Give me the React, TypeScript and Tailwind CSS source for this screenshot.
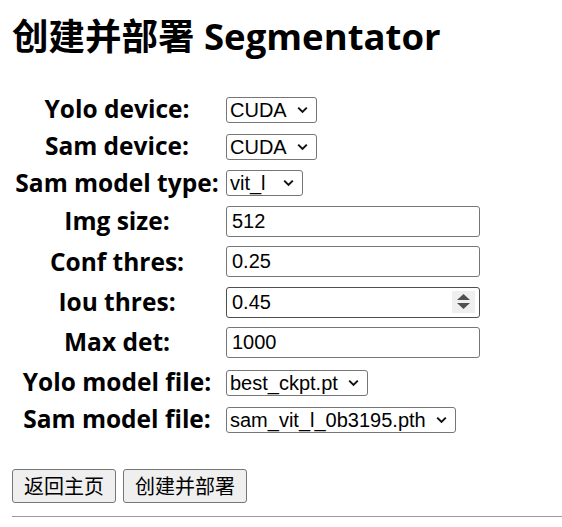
import type { ReactNode } from 'react';

const labelFont = { fontFamily: '"Open Sans", "Noto Sans CJK SC", sans-serif' };
const fieldFont = { fontFamily: '"Liberation Sans", Arial, sans-serif' };
const cjkFont = { fontFamily: '"Noto Sans CJK SC", "Open Sans", sans-serif' };

function Row({ label, h, children }: { label: string; h: string; children: ReactNode }) {
  return (
    <div className={`grid grid-cols-[210px_1fr] gap-x-1 items-center ${h}`}>
      <div className="text-center text-[24.5px] font-bold leading-none text-black whitespace-nowrap" style={labelFont}>
        {label}
      </div>
      <div className="flex items-center">{children}</div>
    </div>
  );
}

function Select({ value, options, w }: { value: string; options: string[]; w: string }) {
  return (
    <div className={`relative inline-block ${w}`}>
      <select
        defaultValue={value}
        className="appearance-none w-full h-[26px] border border-[#767676] rounded-[3px] bg-white pl-[3px] pr-5 text-[20px] leading-[24px] text-black outline-none"
        style={fieldFont}
      >
        {options.map((o) => (
          <option key={o}>{o}</option>
        ))}
      </select>
      <svg
        className="absolute right-[9px] top-[9px] pointer-events-none"
        width="11"
        height="8"
        viewBox="0 0 11 8"
        fill="none"
      >
        <path d="M1.2 1.6 L5.5 5.9 L9.8 1.6" stroke="#111" strokeWidth="2" />
      </svg>
    </div>
  );
}

function TextInput({ value, spinner }: { value: string; spinner?: boolean }) {
  return (
    <div className="relative w-[254px]">
      <input
        type="text"
        defaultValue={value}
        className={`w-full h-[31px] rounded-[3px] bg-white pl-[5px] text-[20px] text-black outline-none border ${
          spinner ? 'border-[#4f4f4f]' : 'border-[#767676]'
        }`}
        style={fieldFont}
      />
      {spinner && (
        <div className="absolute right-[5px] top-[4px] w-[23px] h-[22px] bg-[#efefef] flex flex-col items-center justify-center gap-[3px] pointer-events-none">
          <svg width="13" height="6" viewBox="0 0 13 6">
            <path d="M6.5 0 L13 6 L0 6 Z" fill="#505050" />
          </svg>
          <svg width="13" height="6" viewBox="0 0 13 6">
            <path d="M0 0 L13 0 L6.5 6 Z" fill="#505050" />
          </svg>
        </div>
      )}
    </div>
  );
}

export default function App() {
  return (
    <div className="min-h-screen bg-white pl-3 text-black">
      <h1 className="pt-[12px] text-[36.5px] font-bold leading-[49px] whitespace-nowrap" style={labelFont}>
        创建并部署 Segmentator
      </h1>

      <div className="mt-[30px] flex flex-col">
        <Row label="Yolo device:" h="h-[37px]">
          <Select value="CUDA" options={['CUDA', 'CPU']} w="w-[91px]" />
        </Row>
        <Row label="Sam device:" h="h-[37px]">
          <Select value="CUDA" options={['CUDA', 'CPU']} w="w-[91px]" />
        </Row>
        <Row label="Sam model type:" h="h-[36px]">
          <Select value="vit_l" options={['vit_h', 'vit_l', 'vit_b']} w="w-[77px]" />
        </Row>
        <Row label="Img size:" h="h-[40.5px]">
          <TextInput value="512" />
        </Row>
        <Row label="Conf thres:" h="h-[40.5px]">
          <TextInput value="0.25" />
        </Row>
        <Row label="Iou thres:" h="h-[40.5px]">
          <TextInput value="0.45" spinner />
        </Row>
        <Row label="Max det:" h="h-[40px]">
          <TextInput value="1000" />
        </Row>
        <Row label="Yolo model file:" h="h-[40px]">
          <Select value="best_ckpt.pt" options={['best_ckpt.pt']} w="w-[142px]" />
        </Row>
        <Row label="Sam model file:" h="h-[34px]">
          <Select value="sam_vit_l_0b3195.pth" options={['sam_vit_l_0b3195.pth']} w="w-[230px]" />
        </Row>
      </div>

      <div className="mt-[32px] flex gap-[7px]">
        <button
          className="h-[34px] px-[11px] border border-[#767676] rounded-[3px] bg-[#efefef] text-[20px] leading-none text-black"
          style={cjkFont}
        >
          返回主页
        </button>
        <button
          className="h-[34px] px-[11px] border border-[#767676] rounded-[3px] bg-[#efefef] text-[20px] leading-none text-black"
          style={cjkFont}
        >
          创建并部署
        </button>
      </div>

      <hr className="mt-[13px] border-0 border-t border-[#9a9a9a]" />
    </div>
  );
}
